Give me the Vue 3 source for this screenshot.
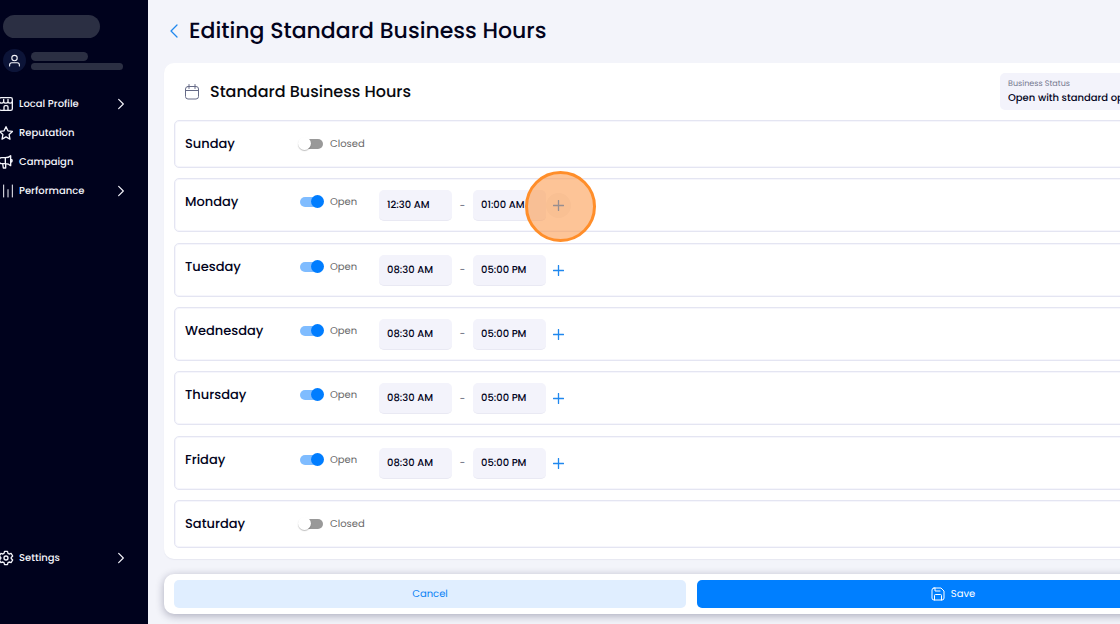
<script setup>
import { ref } from 'vue'

const menu = [
  { label: 'Local Profile', icon: 'store', expandable: true },
  { label: 'Reputation', icon: 'star', expandable: false },
  { label: 'Campaign', icon: 'megaphone', expandable: false },
  { label: 'Performance', icon: 'chart', expandable: true }
]

const days = ref([
  { name: 'Sunday', open: false, from: '', to: '' },
  { name: 'Monday', open: true, from: '12:30 AM', to: '01:00 AM', focus: true },
  { name: 'Tuesday', open: true, from: '08:30 AM', to: '05:00 PM' },
  { name: 'Wednesday', open: true, from: '08:30 AM', to: '05:00 PM' },
  { name: 'Thursday', open: true, from: '08:30 AM', to: '05:00 PM' },
  { name: 'Friday', open: true, from: '08:30 AM', to: '05:00 PM' },
  { name: 'Saturday', open: false, from: '', to: '' }
])
</script>

<template>
  <div class="app">
    <aside class="sidebar">
      <div class="logo"></div>
      <div class="user">
        <span class="avatar">
          <svg viewBox="0 0 24 24" class="icon"><circle cx="12" cy="7.5" r="5" /><path d="M3 22v-2a4 4 0 0 1 4-4h10a4 4 0 0 1 4 4v2" /></svg>
        </span>
        <span class="bars"><i class="bar short"></i><i class="bar"></i></span>
      </div>
      <nav class="nav">
        <a v-for="item in menu" :key="item.label" href="#" class="link">
          <svg viewBox="0 0 24 24" class="icon">
            <template v-if="item.icon === 'store'">
              <rect x="2" y="2.5" width="19.5" height="19" rx="2.5" />
              <path d="M2 8.500c1 3 5.500 3 6.500 0c1 3 5.500 3 6.500 0c1 3 5.500 3 6.500 0M8.500 5v3M15 5v3M9 21v-4.500a2 2 0 0 1 2-2h2a2 2 0 0 1 2 2V21" />
            </template>
            <path v-else-if="item.icon === 'star'" d="M12 2.500l2.900 6.200 6.700.9-4.900 4.700 1.200 6.900-5.900-3.300-5.900 3.300 1.200-6.900-4.900-4.700 6.700-.9z" />
            <template v-else-if="item.icon === 'megaphone'">
              <path d="M11 5.500H5.500a3.500 4 0 0 0 0 9H11zM11 5.500c3 0 6-1 8-3v15c-2-2-5-3-8-3M19 7.500c3 .5 3 4.500 0 5M7 14.500l1 6.500h3.500v-6.500" />
            </template>
            <path v-else class="thin" d="M2 14v7M8.500 3v18M15 10v11M21.500 3v18" />
          </svg>
          <span class="label">{{ item.label }}</span>
          <svg v-if="item.expandable" viewBox="0 0 24 24" class="chevron"><path d="M8 4l8 8-8 8" /></svg>
        </a>
      </nav>
      <nav class="nav bottom">
        <a href="#" class="link">
          <svg viewBox="0 0 24 24" class="icon">
            <path d="M9.800 2h4.400l.8 3 1.800 1 3-.8 2.200 3.800-2.200 2.100v1.800l2.200 2.100-2.200 3.800-3-.8-1.800 1-.8 3H9.800L9 19l-1.800-1-3 .8L2 15l2.200-2.100v-1.800L2 9l2.200-3.800 3 .8L9 5z" />
            <circle cx="12" cy="12" r="3" />
          </svg>
          <span class="label">Settings</span>
          <svg viewBox="0 0 24 24" class="chevron"><path d="M8 4l8 8-8 8" /></svg>
        </a>
      </nav>
    </aside>

    <main class="main">
      <div class="page">
        <header class="title">
          <button class="back" type="button" aria-label="Back">
            <svg viewBox="0 0 8 14"><path d="M7 1L1 7l6 6" /></svg>
          </button>
          <h1>Editing Standard Business Hours</h1>
        </header>

        <section class="card">
          <div class="card-head">
            <svg viewBox="0 0 16 16" class="calendar"><rect x="1.500" y="2.500" width="13" height="12.500" rx="2.500" /><path d="M1.500 6.500h13M5 .5v4M11 .5v4" /></svg>
            <h2>Standard Business Hours</h2>
            <div class="status">
              <label for="status">Business Status</label>
              <select id="status"><option>Open with standard open hours</option></select>
            </div>
          </div>

          <div class="days">
            <div v-for="day in days" :key="day.name" class="day">
              <h3>{{ day.name }}</h3>
              <label class="toggle">
                <input v-model="day.open" type="checkbox" />
                <span>{{ day.open ? 'Open' : 'Closed' }}</span>
              </label>
              <div v-if="day.open" class="times">
                <input v-model="day.from" type="text" :aria-label="day.name + ' opening time'" />
                <span class="dash">-</span>
                <input v-model="day.to" type="text" :aria-label="day.name + ' closing time'" />
                <button type="button" class="add" :class="{ focus: day.focus }" :aria-label="'Add hours for ' + day.name">
                  <svg viewBox="0 0 10 10"><path d="M5 0.500v9M0.500 5h9" /></svg>
                  <span v-if="day.focus" class="spot"></span>
                </button>
              </div>
            </div>
          </div>
        </section>

        <footer class="actions">
          <button type="button" class="cancel">Cancel</button>
          <button type="button" class="save">
            <svg viewBox="0 0 14 14"><path d="M3 1h7l3 3v7a2 2 0 0 1-2 2H3a2 2 0 0 1-2-2V3a2 2 0 0 1 2-2zM4 1v3h5M3.500 13V8.500a1 1 0 0 1 1-1h5a1 1 0 0 1 1 1V13" /></svg>
            Save
          </button>
        </footer>
      </div>
    </main>
  </div>
</template>

<style>
body {
  background: #f3f4fa;
}
</style>

<style scoped>
* {
  box-sizing: border-box;
}
.app {
  display: flex;
  min-height: 100vh;
  overflow: hidden;
  font-family: Poppins, Inter, "Noto Sans", sans-serif;
  font-size: 10px;
  color: #02031c;
  text-rendering: geometricPrecision;
}
h1, h2, h3 {
  margin: 0;
  font-weight: 500;
}
button, input, select {
  font: inherit;
  color: inherit;
  text-rendering: inherit;
  border: 0;
  padding: 0;
  margin: 0;
}
button {
  cursor: pointer;
}
svg {
  fill: none;
  stroke: currentColor;
  stroke-linecap: round;
  stroke-linejoin: round;
  flex: none;
}
.sidebar {
  width: 148px;
  flex: none;
  display: flex;
  flex-direction: column;
  padding: 15px 0 52px;
  background: #00021d;
  color: #f4f5fb;
}
.logo {
  width: 97px;
  height: 23px;
  margin-left: 3px;
  border-radius: 12px;
  background: #2b2f43;
}
.user {
  display: flex;
  align-items: center;
  gap: 5px;
  margin: 11px 0 17px 3px;
}
.avatar {
  display: grid;
  place-items: center;
  width: 23px;
  height: 23px;
  border-radius: 50%;
  background: #0c1438;
}
.avatar .icon {
  width: 13px;
  height: 13px;
}
.bars {
  display: grid;
  gap: 2px;
}
.bar {
  width: 92px;
  height: 7px;
  border-radius: 4px;
  background: #2b2f43;
}
.bar.short {
  width: 57px;
  height: 9px;
  border-radius: 5px;
}
.nav {
  display: grid;
  margin-left: -2px;
}
.nav.bottom {
  margin-top: auto;
}
.link {
  display: flex;
  align-items: center;
  height: 29px;
  gap: 5px;
  padding-right: 20px;
  color: inherit;
  font-weight: 500;
  text-decoration: none;
}
.link .label {
  flex: 1;
}
.icon {
  width: 16px;
  height: 16px;
  stroke-width: 2;
}
.chevron {
  width: 14px;
  height: 14px;
  stroke-width: 2;
}
.thin {
  stroke-width: 1.5;
}
.main {
  flex: 1;
  min-width: 0;
  display: flex;
  overflow: hidden;
  background: #f3f4fa;
}
/* The form is wider than the viewport and runs past its right edge. */
.page {
  flex: none;
  width: calc(100% + 99px);
  display: flex;
  flex-direction: column;
  padding: 0 0 10px 16px;
}
.title {
  display: flex;
  align-items: center;
  gap: 11px;
  height: 63px;
  padding: 0 0 1px 6px;
}
.back {
  display: flex;
  background: none;
  color: #2088ee;
}
.back svg {
  width: 8px;
  height: 14px;
  stroke-width: 1.3;
}
h1 {
  font-size: 22px;
  line-height: 30px;
}
.card {
  flex: 1;
  display: flex;
  flex-direction: column;
  padding: 10px 10px 11px;
  border-radius: 10px;
  background: #fff;
  box-shadow: 0 1px 1px #e7e8f1;
}
.card-head {
  display: flex;
  align-items: center;
  height: 37px;
  margin-bottom: 10px;
  padding-left: 10px;
}
.calendar {
  width: 16px;
  height: 16px;
  color: #666b87;
}
h2 {
  flex: 1;
  margin-left: 10px;
  font-size: 16px;
  line-height: 20px;
  color: #08090e;
}
.status {
  width: 209px;
  height: 37px;
  padding: 5px 8px;
  border-radius: 5px;
  background: #f3f3fb;
}
.status label {
  display: block;
  font-size: 8px;
  line-height: 11px;
  color: #75798f;
}
.status select {
  display: block;
  width: 100%;
  height: 16px;
  appearance: none;
  background: none;
  font-weight: 500;
}
.days {
  flex: 1;
  display: flex;
  flex-direction: column;
  justify-content: space-between;
}
.day {
  display: flex;
  align-items: flex-start;
  padding: 9px 10px;
  border: 1px solid #e4e5f2;
  border-radius: 5px;
  box-shadow: inset 0 0 0 1px #f6f6fc;
}
h3 {
  width: 115px;
  font-size: 13px;
  line-height: 28px;
}
.toggle {
  display: flex;
  align-items: center;
  gap: 7px;
  width: 79px;
  height: 28px;
  color: #686868;
}
.toggle input {
  position: relative;
  width: 23px;
  height: 10px;
  border-radius: 5px;
  appearance: none;
  background: #999;
}
.toggle input::before {
  content: "";
  position: absolute;
  top: -2px;
  left: -2px;
  width: 13px;
  height: 13px;
  border-radius: 50%;
  background: #fff;
  box-shadow: 0 1px 1px rgba(0, 0, 0, 0.25);
}
.toggle input:checked {
  background: #7fbcff;
}
.toggle input:checked::before {
  left: 11px;
  background: #007dff;
  box-shadow: none;
}
.times {
  display: flex;
  align-items: center;
  margin: 2px 0 1px;
}
.times input {
  width: 73px;
  height: 31px;
  padding: 0 8px;
  border-bottom: 1px solid #e9e9f3;
  border-radius: 5px;
  background: #f3f3fb;
  font-weight: 500;
}
.dash {
  width: 21px;
  text-align: center;
  color: #555a6e;
}
.add {
  position: relative;
  display: grid;
  place-items: center;
  width: 25px;
  height: 25px;
  border-radius: 50%;
  background: none;
  color: #2088ee;
}
.add svg {
  width: 11px;
  height: 11px;
  stroke-width: 1.2;
}
.add.focus {
  background: #f5f5f7;
}
.spot {
  position: absolute;
  top: -22px;
  left: -21px;
  width: 71px;
  height: 71px;
  border: 3px solid #ff8e2a;
  border-radius: 50%;
  background: rgba(251, 148, 66, 0.55);
}
.actions {
  display: flex;
  gap: 11px;
  height: 40px;
  margin-top: 15px;
  padding: 6px 10px;
  border-radius: 10px;
  background: #fff;
  box-shadow: 0 2px 8px rgba(20, 20, 55, 0.32);
}
.actions button {
  flex: 1;
  display: flex;
  align-items: center;
  justify-content: center;
  gap: 6px;
  border-radius: 5px;
}
.actions svg {
  width: 14px;
  height: 14px;
}
.cancel {
  background: #e0eeff;
  color: #0b82f5;
}
.actions .save {
  background: #007fff;
  color: #fff;
}
</style>
